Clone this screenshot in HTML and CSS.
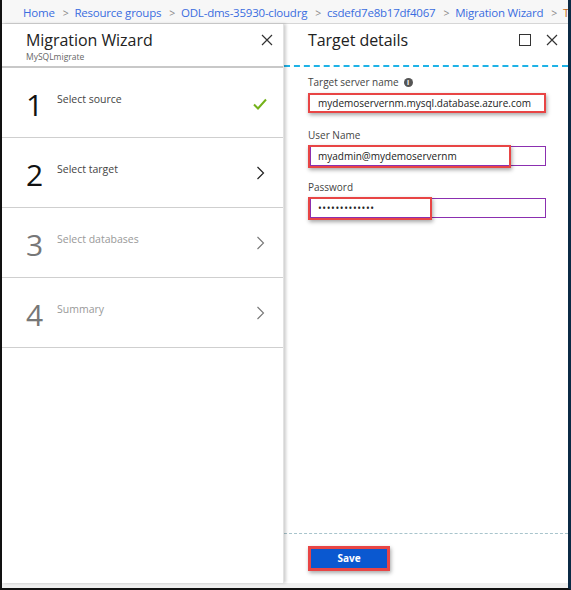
FILE: index.html
```html
<!DOCTYPE html>
<html>
<head>
<meta charset="utf-8">
<link rel="stylesheet" href="styles.css">
</head>
<body>
<div class="frame">
  <div class="crumbs">
    <span class="crumb">Home</span><span class="sep">&gt;</span><span class="crumb">Resource groups</span><span class="sep">&gt;</span><span class="crumb">ODL-dms-35930-cloudrg</span><span class="sep">&gt;</span><span class="crumb">csdefd7e8b17df4067</span><span class="sep">&gt;</span><span class="crumb">Migration Wizard</span><span class="sep">&gt;</span><span class="crumb last">T</span>
  </div>
  <div class="main">
    <div class="blade left">
      <div class="bhead">
        <div class="titles">
          <div class="title">Migration Wizard</div>
          <div class="subtitle">MySQLmigrate</div>
        </div>
        <svg class="x" width="12" height="12" viewBox="0 0 12 12"><path d="M1 1L11 11M11 1L1 11" stroke="#333" stroke-width="1.2" fill="none"/></svg>
      </div>
      <div class="step">
        <div class="num">1</div>
        <div class="label">Select source</div>
        <svg class="ico" width="14" height="12" viewBox="0 0 14 12"><path d="M1 6.5L5 10.5L13 1.5" stroke="#74b21a" stroke-width="2" fill="none"/></svg>
      </div>
      <div class="step">
        <div class="num">2</div>
        <div class="label">Select target</div>
        <svg class="ico chev" width="9" height="14" viewBox="0 0 9 14"><path d="M1.5 1L7.5 7L1.5 13" stroke="#222" stroke-width="1.2" fill="none"/></svg>
      </div>
      <div class="step dim">
        <div class="num">3</div>
        <div class="label">Select databases</div>
        <svg class="ico chev" width="9" height="14" viewBox="0 0 9 14"><path d="M1.5 1L7.5 7L1.5 13" stroke="#777" stroke-width="1.1" fill="none"/></svg>
      </div>
      <div class="step dim">
        <div class="num">4</div>
        <div class="label">Summary</div>
        <svg class="ico chev" width="9" height="14" viewBox="0 0 9 14"><path d="M1.5 1L7.5 7L1.5 13" stroke="#777" stroke-width="1.1" fill="none"/></svg>
      </div>
    </div>
    <div class="blade right">
      <div class="rhead">
        <div class="title">Target details</div>
        <svg class="sq" width="12" height="12" viewBox="0 0 12 12"><rect x="0.5" y="0.5" width="11" height="11" stroke="#333" fill="none"/></svg>
        <svg class="x" width="12" height="12" viewBox="0 0 12 12"><path d="M1 1L11 11M11 1L1 11" stroke="#333" stroke-width="1.2" fill="none"/></svg>
      </div>
      <div class="form">
        <div class="flabel">Target server name <span class="info">i</span></div>
        <div class="field hl full">mydemoservernm.mysql.database.azure.com</div>
        <div class="flabel">User Name</div>
        <div class="field purple"><div class="hl inner w1">myadmin@mydemoservernm</div></div>
        <div class="flabel">Password</div>
        <div class="field purple"><div class="hl inner w2 pw">&bull;&bull;&bull;&bull;&bull;&bull;&bull;&bull;&bull;&bull;&bull;&bull;&bull;</div></div>
      </div>
      <div class="footer">
        <div class="save">Save</div>
      </div>
    </div>
  </div>
  <div class="strip"></div>
</div>
</body>
</html>
```
FILE: styles.css
```css
html, body { margin: 0; padding: 0; }
body {
  width: 571px;
  height: 590px;
  font-family: "Open Sans", "Noto Sans", sans-serif;
  background: #fff;
  overflow: hidden;
}
.frame {
  box-sizing: border-box;
  width: 571px;
  height: 590px;
  border-left: 2px solid #111;
  border-right: 3px solid #0b2a45;
  border-bottom: 2px solid #111;
  display: flex;
  flex-direction: column;
}
.crumbs {
  height: 24px;
  box-sizing: border-box;
  background: #f7f7f7;
  border-bottom: 1px solid #d6d6d6;
  padding-left: 21px;
  font-size: 11.5px;
  line-height: 25px;
  white-space: nowrap;
  overflow: hidden;
  letter-spacing: -0.22px;
}
.crumb { color: #3a6de0; }
.crumb.last { color: #c2671b; }
.sep { color: #888; margin: 0 6px 0 8px; font-size: 10.5px; }
.main {
  flex: 1;
  display: flex;
  min-height: 0;
}
.blade { background: #fff; }
.blade.left {
  width: 281px;
  box-shadow: 2px 0 3px rgba(0,0,0,0.2);
  border-right: 1px solid #e2e2e2;
  position: relative;
  z-index: 1;
}
.bhead {
  height: 42px;
  border-bottom: 2px solid #c8c8c8;
  display: flex;
  align-items: flex-start;
  padding: 0 10px 0 24px;
}
.titles { flex: 1; padding-top: 5px; }
.title {
  font-size: 16px;
  color: #222;
  line-height: 22px;
  letter-spacing: -0.05px;
}
.subtitle {
  font-size: 8.5px;
  color: #666;
  line-height: 12px;
}
.bhead .x { margin-top: 10px; }
.step {
  height: 69px;
  border-bottom: 1px solid #cfcfcf;
  display: flex;
  align-items: flex-start;
  padding: 0 16px 0 24px;
  position: relative;
}
.num {
  font-size: 30px;
  line-height: 30px;
  color: #111;
  width: 31px;
  margin-top: 22px;
  font-weight: 400;
}
.label {
  flex: 1;
  font-size: 10.5px;
  color: #444;
  margin-top: 24px;
}
.dim .num { color: #777; }
.dim .label { color: #999; }
.ico { margin-top: 30px; }
.ico.chev { margin-top: 28px; margin-right: 2px; }
.blade.right {
  flex: 1;
  display: flex;
  flex-direction: column;
}
.rhead {
  height: 41px;
  border-bottom: 2px dashed #1eb2e6;
  display: flex;
  align-items: flex-start;
  padding: 0 10px 0 24px;
}
.rhead .title { flex: 1; padding-top: 5px; }
.rhead .sq { margin-top: 10px; margin-right: 15px; }
.rhead .x { margin-top: 10px; }
.form {
  flex: 1;
  padding: 8px 0 0 24px;
}
.flabel {
  font-size: 10px;
  color: #444;
  line-height: 14px;
  display: flex;
  align-items: center;
}
.info {
  display: inline-block;
  width: 9px;
  height: 9px;
  border-radius: 50%;
  background: #555;
  color: #fff;
  font-size: 7px;
  line-height: 9px;
  text-align: center;
  font-weight: bold;
  margin-left: 5px;
}
.hl {
  border: 2px solid #e84545;
  box-shadow: 1px 2px 4px rgba(0,0,0,0.35);
  box-sizing: border-box;
  font-size: 10px;
  color: #222;
  padding-left: 8px;
  line-height: 16px;
}
.field.full {
  width: 238px;
  height: 20px;
  margin: 4px 0 15px;
}
.field.purple {
  width: 236px;
  height: 20px;
  border: 1px solid #8b2fb0;
  box-sizing: border-box;
  margin: 4px 0 14px 2px;
  position: relative;
}
.inner {
  position: absolute;
  left: -3px;
  top: -2px;
  height: 23px;
  line-height: 19px;
}
.w1 { width: 203px; }
.w2 { width: 124px; }
.pw { font-size: 10px; letter-spacing: 0.6px; }
.footer {
  height: 50px;
  box-sizing: border-box;
  border-top: 1px dashed #a8c4cc;
  padding: 12px 0 0 24px;
}
.save {
  width: 82px;
  height: 25px;
  box-sizing: border-box;
  border: 3px solid #e84545;
  background: #0a58d0;
  color: #fff;
  font-size: 10px;
  font-weight: bold;
  text-align: center;
  line-height: 19px;
  box-shadow: 1px 2px 4px rgba(0,0,0,0.35);
}
.strip {
  height: 5px;
  background: #efefef;
}
```
